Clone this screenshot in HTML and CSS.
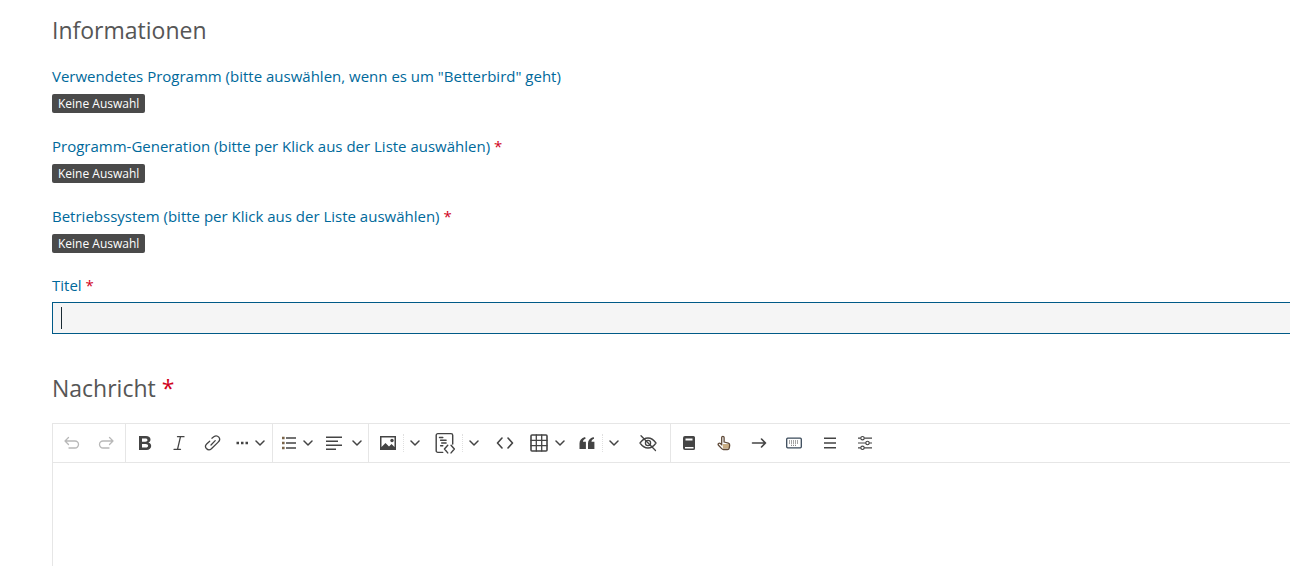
FILE: index.html
```html
<!DOCTYPE html>
<html lang="de">
<head>
<meta charset="utf-8">
<title>Informationen</title>
<link rel="stylesheet" href="styles.css">
</head>
<body>
<main class="form">
  <h2 class="heading">Informationen</h2>
  <div class="fields">
    <div class="field">
      <div class="label">Verwendetes Programm (bitte auswählen, wenn es um "Betterbird" geht)</div>
      <span class="badge">Keine Auswahl</span>
    </div>
    <div class="field">
      <div class="label">Programm-Generation (bitte per Klick aus der Liste auswählen) <span class="req">*</span></div>
      <span class="badge">Keine Auswahl</span>
    </div>
    <div class="field">
      <div class="label">Betriebssystem (bitte per Klick aus der Liste auswählen) <span class="req">*</span></div>
      <span class="badge">Keine Auswahl</span>
    </div>
  </div>
  <div class="title-field">
    <div class="label">Titel <span class="req">*</span></div>
    <div class="input"><span class="caret"></span></div>
  </div>
  <h2 class="heading heading-msg">Nachricht <span class="req">*</span></h2>
  <div class="editor">
    <div class="toolbar">
      <div class="group g1">
        <span class="btn w34 off"><svg viewBox="0 0 20 20"><path class="s" d="M3 8h10a3.500 3.500 0 0 1 0 7H7M6.500 4.500 3 8l3.500 3.500"/></svg></span>
        <span class="btn w34 off"><svg viewBox="0 0 20 20"><path class="s" d="M17 8H7a3.500 3.500 0 0 0 0 7h6M13.500 4.500 17 8l-3.500 3.500"/></svg></span>
      </div>
      <div class="group g2">
        <span class="btn w34"><svg viewBox="0 0 20 20"><path class="f" fill-rule="evenodd" d="M4 3h7c2.800 0 4.500 1.400 4.500 3.600 0 1.500-.8 2.600-2.200 3 1.800.4 2.900 1.600 2.900 3.400 0 2.400-1.800 3.900-4.800 3.900H4V3Zm3 2.400v3.300h3.400c1.300 0 2.100-.6 2.100-1.600s-.8-1.700-2.100-1.700H7Zm0 5.500v3.600h3.800c1.400 0 2.300-.7 2.300-1.800s-.9-1.800-2.300-1.800H7Z"/></svg></span>
        <span class="btn w34"><svg viewBox="0 0 20 20"><path class="s" d="M8.500 3.700H15M5 16.300h6.500M11.500 3.700 8.500 16.300"/></svg></span>
        <span class="btn w33"><svg viewBox="0 0 20 20"><path class="s" d="M8.900 5.200 10.800 3.700c1.700-1.200 3.800-.9 5 .5 1.200 1.500.9 3.600-.6 4.900l-6.800 6.700c-1.600 1.300-3.700 1.100-5-.3-1.200-1.400-1-3.500.5-4.800l2.800-2.500M12.200 7.600 8 12"/></svg></span>
        <span class="btn w43 wide"><svg class="i-dots" viewBox="0 0 13 4"><path class="f" d="M.5 .8h2.500v2.500H.5zM5 .8h2.500v2.500H5zM9.500 .8h2.500v2.500H9.500z"/></svg><svg class="chev" viewBox="0 0 10 10"><path class="c" d="m1 3 4 4 4-4"/></svg></span>
      </div>
      <div class="group g3">
        <span class="btn w44"><svg viewBox="0 0 20 20"><path class="f" d="M7 4.200h10v1.600H7zM7 9.200h10v1.600H7zM7 14.200h10v1.600H7z"/><path class="o" d="M3 3.700h2.600v2.600H3zM3 8.700h2.600v2.600H3zM3 13.700h2.600v2.600H3z"/></svg><svg class="chev" viewBox="0 0 10 10"><path class="c" d="m1 3 4 4 4-4"/></svg></span>
        <span class="btn w49 wider"><svg viewBox="0 0 20 20"><path class="f" d="M2 3.500h16V5H2zM2 7.500h12V9H2zM2 11.500h16V13H2zM2 15.500h10V17H2z"/></svg><svg class="chev" viewBox="0 0 10 10"><path class="c" d="m1 3 4 4 4-4"/></svg></span>
      </div>
      <div class="group g4">
        <span class="btn w33 split"><svg viewBox="0 0 20 20"><path class="f" fill-rule="evenodd" d="M2 3h16v14H2V3Zm1.500 1.500v9.500l4-4 3.500 3.500 2.500-2.500 3 3V4.500h-13Z"/><circle class="f" cx="14" cy="7.500" r="1.700"/></svg></span>
        <span class="btn w22"><svg class="chev" viewBox="0 0 10 10"><path class="c" d="m1 3 4 4 4-4"/></svg></span>
        <span class="btn w37 split"><svg class="big" viewBox="0 0 20 20"><path class="s" d="M8 18.500H3.500a1.500 1.500 0 0 1-1.500-1.500V3a1.500 1.500 0 0 1 1.500-1.500h12A1.500 1.500 0 0 1 17 3v8"/><path class="s" d="M5 5h3M6 7.500h5M7 10h4M6 12.500h2M12.500 12l-3 3.500 3 3.500M15.500 12l3 3.500-3 3.500"/></svg></span>
        <span class="btn w22"><svg class="chev" viewBox="0 0 10 10"><path class="c" d="m1 3 4 4 4-4"/></svg></span>
        <span class="btn w40"><svg viewBox="0 0 20 20"><path class="s mid" d="M7 5 2.500 10 7 15M13 5l4.500 5-4.500 5"/></svg></span>
        <span class="btn w44 wide"><svg viewBox="0 0 20 20"><rect class="s mid" x="2" y="2" width="16" height="16" rx="1"/><path class="s" d="M2 7.300h16M2 12.700h16M7.300 2v16M12.700 2v16"/></svg><svg class="chev" viewBox="0 0 10 10"><path class="c" d="m1 3 4 4 4-4"/></svg></span>
        <span class="btn w34 split"><svg class="shift" viewBox="0 0 20 20"><path class="f" d="M2.500 16V10.500c0-3.300 1.800-5.500 5.600-6.500l.5 1.700C6.800 6.300 6 7.300 6 8.800h2.900V16H2.500ZM11 16V10.500c0-3.300 1.800-5.500 5.600-6.500l.5 1.700c-1.800.6-2.600 1.600-2.600 3.100h2.900V16H11Z"/></svg></span>
        <span class="btn w22"><svg class="chev" viewBox="0 0 10 10"><path class="c" d="m1 3 4 4 4-4"/></svg></span>
        <span class="btn w44"><svg class="shift" viewBox="0 0 20 20"><path class="s" d="M2 10C4.500 6.500 7.200 5 10 5s5.500 1.500 8 5c-2.500 3.500-5.200 5-8 5s-5.500-1.500-8-5Z"/><circle class="s" cx="10" cy="10" r="2.600"/><path class="s" d="m3 2.800 14.500 14.700"/></svg></span>
      </div>
      <div class="group g5">
        <span class="btn w35"><svg viewBox="0 0 20 20"><path class="f" fill-rule="evenodd" d="M6 3h8.500A1.500 1.500 0 0 1 16 4.500v11a1.500 1.500 0 0 1-1.500 1.500H6A2 2 0 0 1 4 15V5a2 2 0 0 1 2-2Zm.5 2.500v2h7v-2h-7Zm-.5 8.500v1.500h8.500V14H6Z"/></svg></span>
        <span class="btn w35"><svg viewBox="0 0 20 20"><path class="h" d="M8.500 11h6.500v4.500H9Z"/><path class="s hand" d="M7.700 10.500v-6a1.200 1.200 0 0 1 2.400 0V9l4.200 1.200c.9.300 1.500 1 1.400 2l-.4 2.600c-.2 1-.9 1.700-1.900 1.700H9.500c-.8 0-1.300-.3-1.800-.9l-3.200-3.300c-.6-.7-.5-1.400.1-1.900.6-.5 1.300-.4 1.900.1l1.200 1.200"/></svg></span>
        <span class="btn w35"><svg viewBox="0 0 20 20"><path class="s mid" d="M3.500 10h13M12.500 6l4 4-4 4"/></svg></span>
        <span class="btn w36"><svg viewBox="0 0 20 20"><rect class="s blue" x="2.700" y="5.200" width="14.600" height="9.600" rx="1"/><path class="k" d="M5 8h10M5 10h10M7 12.300h6"/></svg></span>
        <span class="btn w35"><svg viewBox="0 0 20 20"><path class="f" d="M4 4.500h12v1.600H4zM4 9.200h12v1.600H4zM4 13.900h12v1.600H4z"/></svg></span>
        <span class="btn w35"><svg viewBox="0 0 20 20"><path class="f" d="M3 4.600h14v1.200H3zM3 9.400h14v1.200H3zM3 14.200h14v1.200H3z"/><circle class="w" cx="7.500" cy="5.200" r="1.700"/><circle class="w" cx="12.500" cy="10" r="1.700"/><circle class="w" cx="7.500" cy="14.800" r="1.700"/></svg></span>
      </div>
    </div>
    <div class="content"></div>
  </div>
</main>
</body>
</html>
```
FILE: styles.css
```css
html, body { margin: 0; padding: 0; height: 566px; overflow: hidden; background: #fff; }
body { font-family: "Open Sans", sans-serif; color: #505050; }
.form { width: 1300px; margin-left: 52px; padding-top: 15px; }
.heading { margin: 0; font-size: 23px; line-height: 30px; font-weight: 400; color: #565656; }
.heading-msg { margin-top: 39px; height: 32px; }
.fields { margin-top: 21px; }
.field { height: 70px; }
.label { font-size: 15px; line-height: 20px; color: #00699b; }
.req { color: #d0021b; }
.badge { display: inline-block; margin-top: 8px; height: 19px; line-height: 19px; padding: 0 6px; border-radius: 2px; background: #4a4a4a; color: #fff; font-size: 12px; }
.title-field { margin-top: -1px; }
.input { box-sizing: border-box; height: 32px; margin-top: 7px; border: 1px solid #005a87; background: #f5f5f5; padding: 4px 8px; }
.caret { display: block; width: 1px; height: 22px; background: #1a2a33; }
.editor { margin-top: 18px; height: 200px; border: 1px solid #e6e6e6; box-sizing: border-box; }
.toolbar { display: flex; height: 38px; border-bottom: 1px solid #e6e6e6; }
.group { display: flex; align-items: center; border-right: 1px solid #e6e6e6; height: 38px; }
.g1 { padding: 0 2px; }
.g2 { padding-left: 2px; }
.g3 { padding: 0 1px; }
.g4 { padding: 0 1px 0 2px; }
.g5 { border-right: none; }
.btn { display: flex; align-items: center; justify-content: center; gap: 4px; height: 38px; }
.btn.wide { gap: 6px; }
.btn.wider { gap: 8px; }
.btn svg { width: 20px; height: 20px; display: block; }
.btn svg.big { width: 22px; height: 22px; }
.btn svg.chev { width: 10px; height: 10px; }
.btn svg.i-dots { width: 13px; height: 4px; }
.btn svg.shift { transform: translateX(1px); }
.split { position: relative; }
.split::after { content: ""; position: absolute; right: 0; top: 10px; height: 18px; border-right: 1px dotted #e0e0e0; }
.w22 { width: 22px; } .w33 { width: 33px; } .w34 { width: 34px; } .w35 { width: 35px; } .w36 { width: 36px; } .w37 { width: 37px; }
.w40 { width: 40px; } .w43 { width: 43px; } .w44 { width: 44px; } .w49 { width: 49px; }
.s { fill: none; stroke: #444; stroke-width: 1.3; stroke-linecap: round; stroke-linejoin: round; }
.s.mid { stroke-width: 1.6; }
.s.blue { stroke: #3a4a5a; }
.s.hand { stroke: #5f4a38; }
.f { fill: #444; }
.o { fill: #7a6448; }
.h { fill: #c9ad84; }
.w { fill: #fff; stroke: #444; stroke-width: 1.1; }
.k { fill: none; stroke: #888; stroke-width: 1.3; stroke-dasharray: 1 1; }
.off .s { stroke: #b8b8b8; }
.c { fill: none; stroke: #444; stroke-width: 1.5; stroke-linecap: round; stroke-linejoin: round; }
.content { height: 150px; }
```
